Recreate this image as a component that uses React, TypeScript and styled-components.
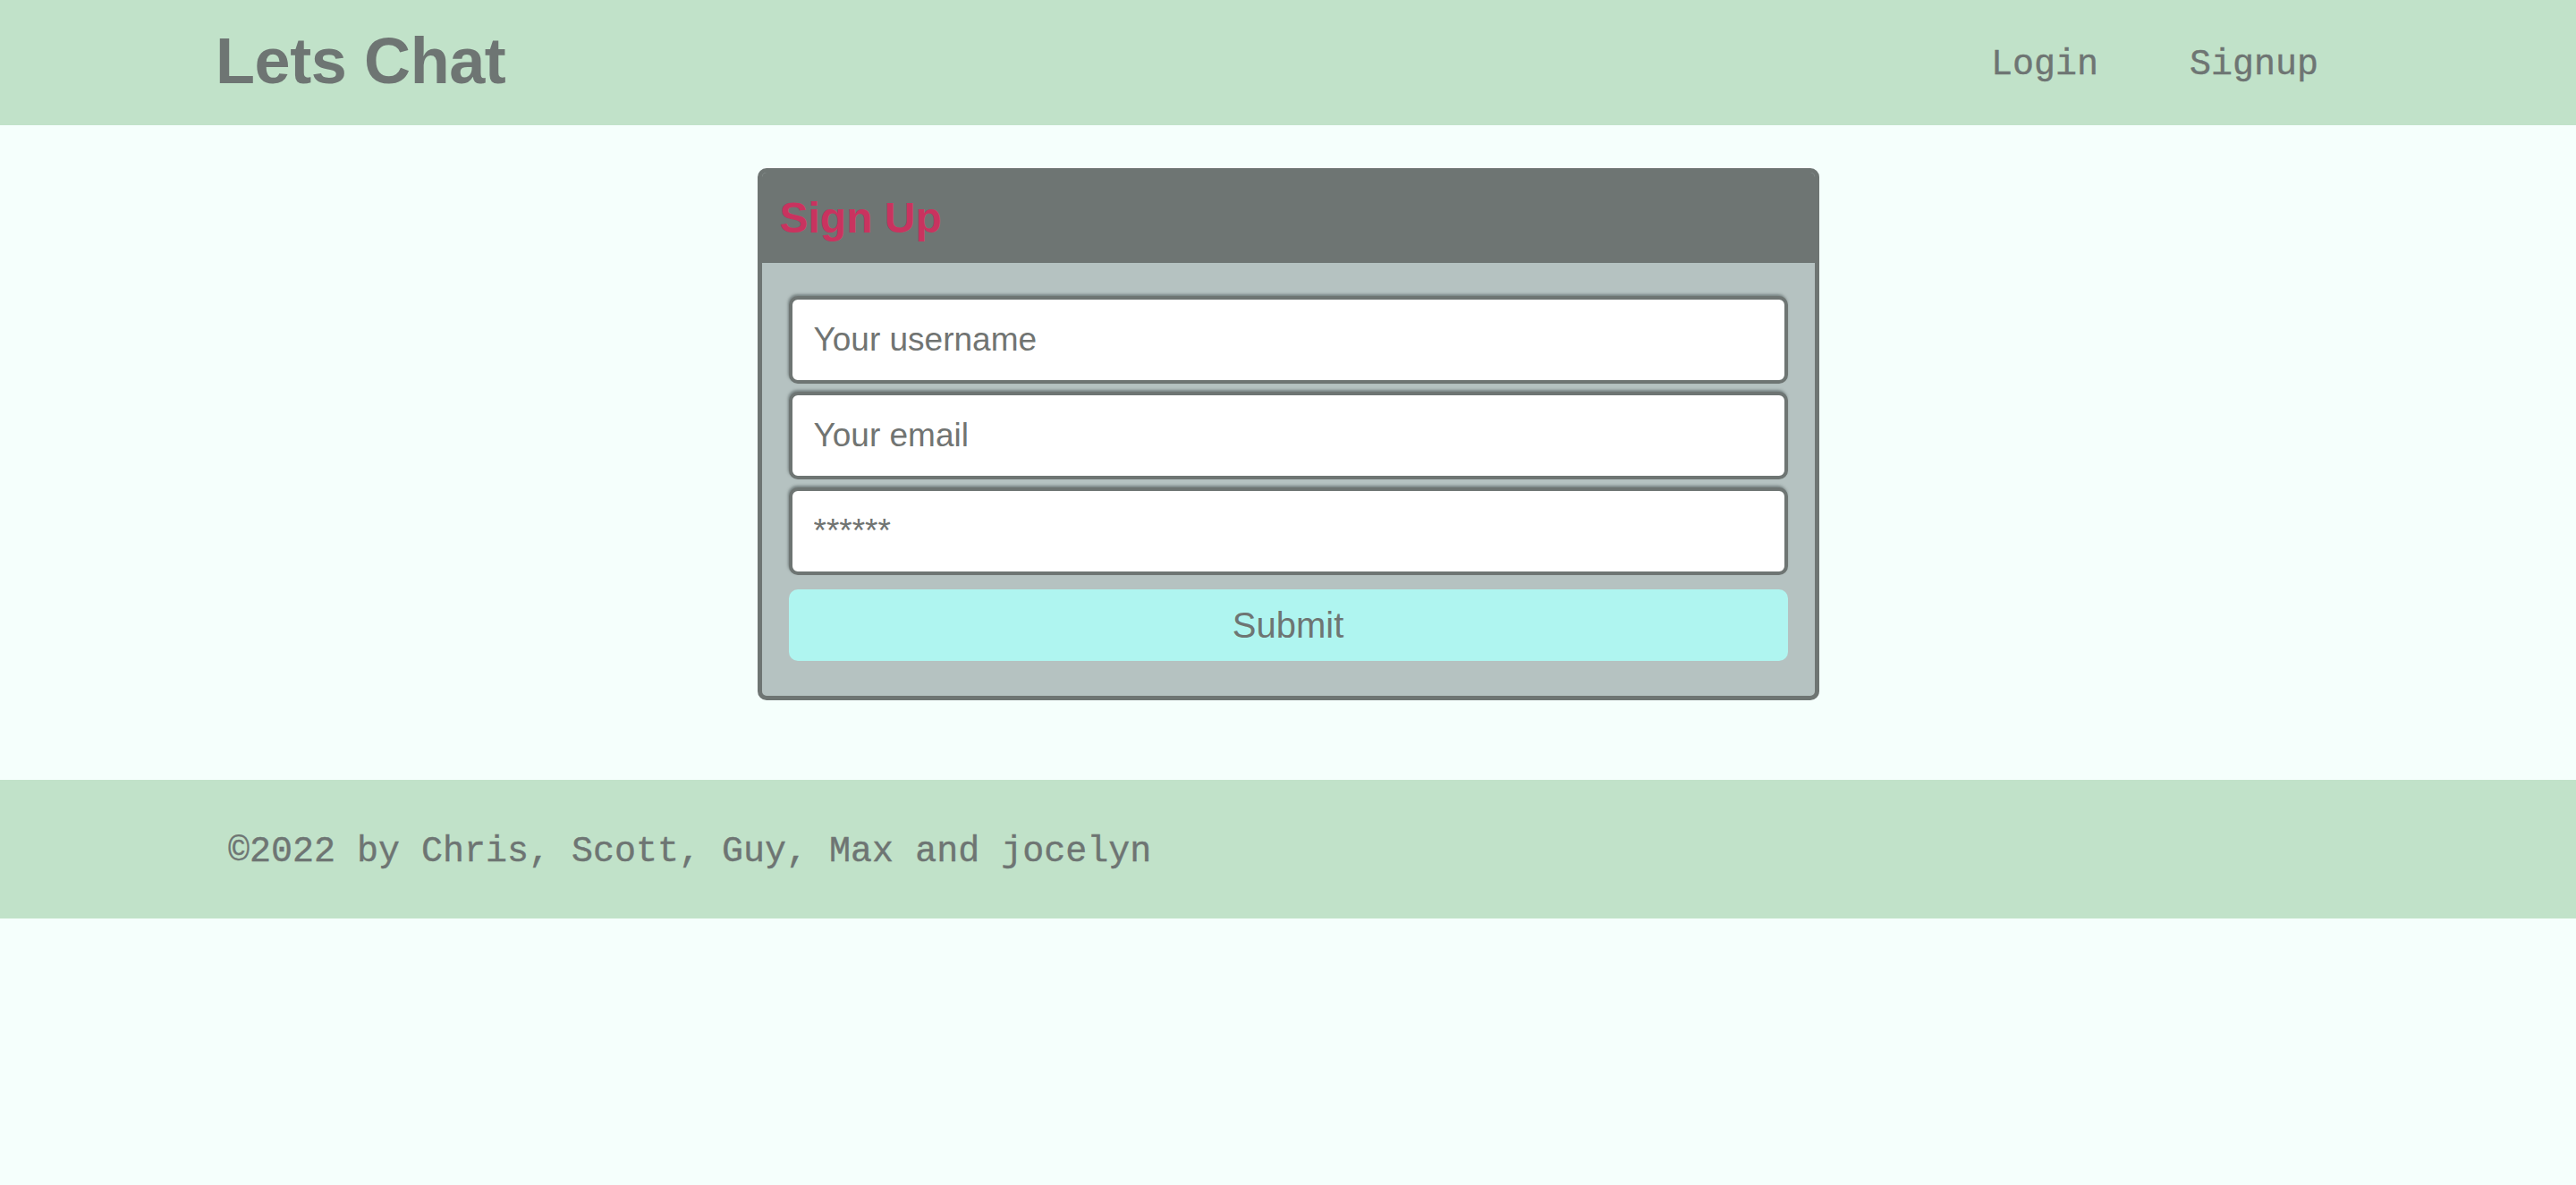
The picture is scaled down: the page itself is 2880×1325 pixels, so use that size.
import React, { FC } from "react";
import styled, { createGlobalStyle } from "styled-components";

const GlobalStyle = createGlobalStyle`
	html, body {
		margin: 0;
		padding: 0;
		background: #f5fffc;
	}

	body {
		font-family: "Liberation Sans", Arial, sans-serif;
		color: #6e7573;
	}
`;

const Page = styled.div`
	min-height: 1325px;
	background: #f5fffc;
`;

const Header = styled.header`
	height: 140px;
	box-sizing: border-box;
	padding: 0 288px 0 241px;
	display: flex;
	align-items: center;
	justify-content: space-between;
	background: #c1e2c9;
`;

const Title = styled.h1`
	margin: 0 0 4px;
	font-size: 72px;
	font-weight: 700;
	color: #6e7573;
	letter-spacing: -0.4px;
`;

const Nav = styled.nav`
	display: flex;
	gap: 102px;
	padding-top: 4px;
`;

const NavLink = styled.a`
	font-family: "Liberation Mono", "Courier New", monospace;
	font-size: 40px;
	color: #6e7573;
	text-decoration: none;
	cursor: pointer;
	-webkit-text-stroke: 0.4px #6e7573;
`;

const Main = styled.main`
	padding: 48px 0 89px;
	display: flex;
	justify-content: center;
`;

const Card = styled.section`
	width: 1187px;
	box-sizing: border-box;
	border: 5px solid #6e7573;
	border-radius: 10px;
	background: #b5c2c1;
	overflow: hidden;
`;

const CardHeader = styled.div`
	height: 101px;
	display: flex;
	align-items: center;
	padding: 0 20px;
	background: #6e7573;

	h2 {
		margin: 0;
		font-size: 48px;
		font-weight: 700;
		color: #c9335f;
	}
`;

const Form = styled.form`
	padding: 37px 30px 39px;
	display: flex;
	flex-direction: column;
	gap: 9px;
`;

const Input = styled.input`
	display: block;
	width: 100%;
	height: 98px;
	box-sizing: border-box;
	padding: 0 24px;
	border: 4px solid #6e7573;
	border-radius: 10px;
	background: #fff;
	box-shadow: -1px -2px 3px rgba(70, 80, 80, 0.55);
	font-family: "Liberation Sans", Arial, sans-serif;
	font-size: 37px;
	color: #6e7573;
	outline: none;

	&::placeholder {
		color: #717472;
	}
`;

const SubmitButton = styled.button`
	margin-top: 7px;
	height: 80px;
	width: 100%;
	border: none;
	border-radius: 10px;
	background: #aff5f0;
	font-family: "Liberation Sans", Arial, sans-serif;
	font-size: 40px;
	color: #6e7573;
	cursor: pointer;
`;

const Footer = styled.footer`
	height: 155px;
	box-sizing: border-box;
	padding: 5px 255px 0;
	display: flex;
	align-items: center;
	background: #c1e2c9;

	p {
		margin: 0;
		font-family: "Liberation Mono", "Courier New", monospace;
		font-size: 40px;
		color: #6e7573;
		-webkit-text-stroke: 0.4px #6e7573;
	}
`;

const App: FC = () => {
	return (
		<Page>
			<GlobalStyle />
			<Header>
				<Title>Lets Chat</Title>
				<Nav>
					<NavLink>Login</NavLink>
					<NavLink>Signup</NavLink>
				</Nav>
			</Header>

			<Main>
				<Card>
					<CardHeader>
						<h2>Sign Up</h2>
					</CardHeader>
					<Form onSubmit={e => e.preventDefault()}>
						<Input type="text" placeholder="Your username" />
						<Input type="email" placeholder="Your email" />
						<Input type="password" placeholder="******" />
						<SubmitButton type="submit">Submit</SubmitButton>
					</Form>
				</Card>
			</Main>

			<Footer>
				<p>©2022 by Chris, Scott, Guy, Max and jocelyn</p>
			</Footer>
		</Page>
	);
};

export default App;
